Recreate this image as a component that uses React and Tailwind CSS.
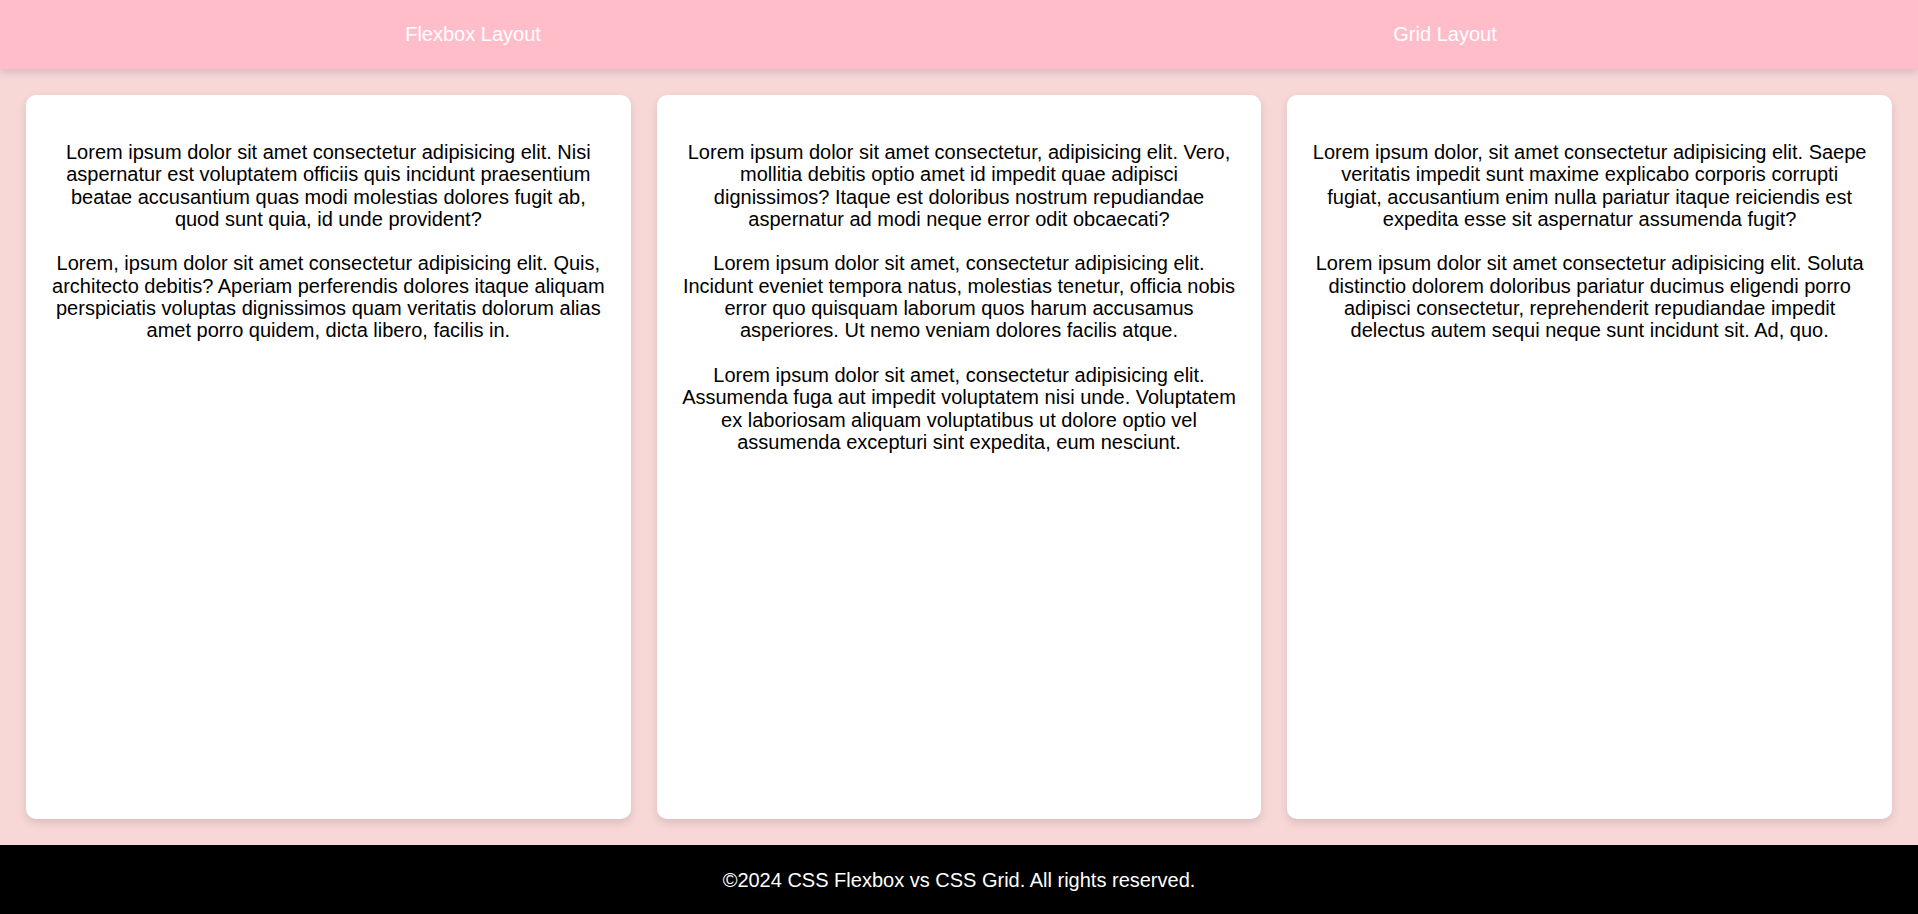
import React from 'react';

const cards = [
  [
    'Lorem ipsum dolor sit amet consectetur adipisicing elit. Nisi aspernatur est voluptatem officiis quis incidunt praesentium beatae accusantium quas modi molestias dolores fugit ab, quod sunt quia, id unde provident?',
    'Lorem, ipsum dolor sit amet consectetur adipisicing elit. Quis, architecto debitis? Aperiam perferendis dolores itaque aliquam perspiciatis voluptas dignissimos quam veritatis dolorum alias amet porro quidem, dicta libero, facilis in.',
  ],
  [
    'Lorem ipsum dolor sit amet consectetur, adipisicing elit. Vero, mollitia debitis optio amet id impedit quae adipisci dignissimos? Itaque est doloribus nostrum repudiandae aspernatur ad modi neque error odit obcaecati?',
    'Lorem ipsum dolor sit amet, consectetur adipisicing elit. Incidunt eveniet tempora natus, molestias tenetur, officia nobis error quo quisquam laborum quos harum accusamus asperiores. Ut nemo veniam dolores facilis atque.',
    'Lorem ipsum dolor sit amet, consectetur adipisicing elit. Assumenda fuga aut impedit voluptatem nisi unde. Voluptatem ex laboriosam aliquam voluptatibus ut dolore optio vel assumenda excepturi sint expedita, eum nesciunt.',
  ],
  [
    'Lorem ipsum dolor, sit amet consectetur adipisicing elit. Saepe veritatis impedit sunt maxime explicabo corporis corrupti fugiat, accusantium enim nulla pariatur itaque reiciendis est expedita esse sit aspernatur assumenda fugit?',
    'Lorem ipsum dolor sit amet consectetur adipisicing elit. Soluta distinctio dolorem doloribus pariatur ducimus eligendi porro adipisci consectetur, reprehenderit repudiandae impedit delectus autem sequi neque sunt incidunt sit. Ad, quo.',
  ],
];

export default function App() {
  return (
    <div className="min-h-screen flex flex-col bg-[#f8d7d7] font-['Liberation_Sans',Arial,sans-serif]">
      {/* Header */}
      <header className="h-[69px] flex pb-[2px] bg-[#ffbdca] shadow-[0_4px_8px_rgba(0,0,0,0.12)] text-white text-[20px] relative z-10">
        <div className="flex-1 flex items-center justify-center pr-[11px]">Flexbox Layout</div>
        <div className="flex-1 flex items-center justify-center pl-[15px]">Grid Layout</div>
      </header>

      {/* Cards */}
      <main className="flex-1 grid grid-cols-3 gap-[26px] p-[26px]">
        {cards.map((paras, i) => (
          <div
            key={i}
            className="bg-white rounded-[10px] shadow-[0_4px_10px_rgba(0,0,0,0.12)] px-[25px] pt-[46px] text-center text-[20px] leading-[22.3px] text-black"
          >
            {paras.map((p, j) => (
              <p key={j} className="mb-[22.3px]">
                {p}
              </p>
            ))}
          </div>
        ))}
      </main>

      {/* Footer */}
      <footer className="h-[69px] flex items-center justify-center bg-black text-white text-[20px]">
        ©2024 CSS Flexbox vs CSS Grid. All rights reserved.
      </footer>
    </div>
  );
}
